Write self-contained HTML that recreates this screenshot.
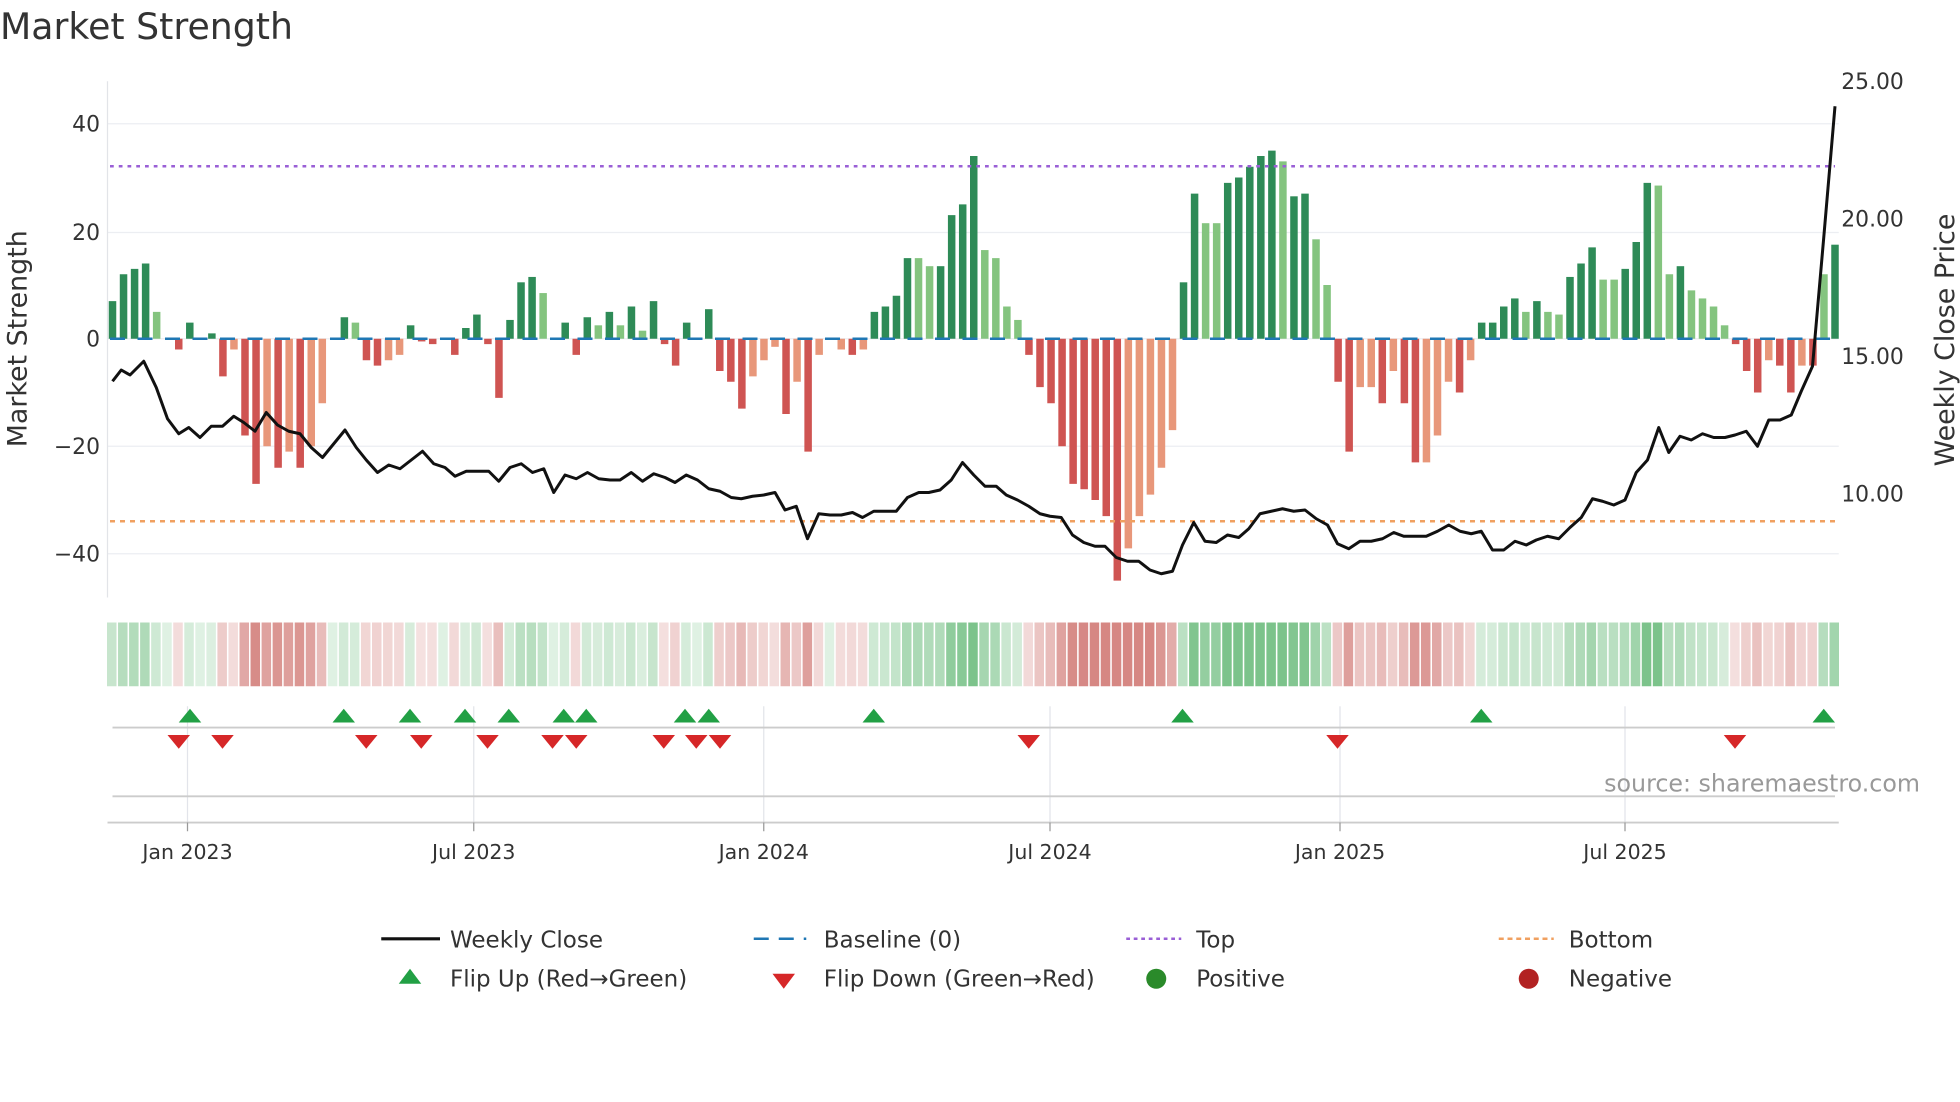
<!DOCTYPE html>
<html><head><meta charset="utf-8"><style>
html,body{margin:0;padding:0;background:#fff;width:1960px;height:1102px;overflow:hidden}
svg{display:block}
text{font-family:"DejaVu Sans","Liberation Sans",sans-serif;fill:#333}
</style></head><body>
<svg id="s" width="1960" height="1102" viewBox="0 0 1568 881.6" xmlns="http://www.w3.org/2000/svg">
<rect width="1568" height="882" fill="#fff"/>
<text x="0" y="31" font-size="29">Market Strength</text>
<g stroke="#eceef2" stroke-width="1">
<line x1="86" x2="1471" y1="99" y2="99"/><line x1="86" x2="1471" y1="186" y2="186"/>
<line x1="86" x2="1471" y1="271" y2="271"/><line x1="86" x2="1471" y1="357" y2="357"/>
<line x1="86" x2="1471" y1="443" y2="443"/>
</g>
<line x1="86" x2="86" y1="65" y2="478" stroke="#e2e4e8"/>
<g font-size="17.5" text-anchor="end">
<text x="80" y="105">40</text><text x="80" y="192">20</text><text x="80" y="277">0</text>
<text x="80" y="363">−20</text><text x="80" y="449">−40</text>
</g>
<g font-size="17.5">
<text x="1473" y="71">25.00</text><text x="1473" y="181">20.00</text>
<text x="1473" y="291">15.00</text><text x="1473" y="401">10.00</text>
</g>
<text transform="translate(21,271) rotate(-90)" font-size="21.5" text-anchor="middle">Market Strength</text>
<text transform="translate(1563,272) rotate(-90)" font-size="21.5" text-anchor="middle">Weekly Close Price</text>
<g id="bars"></g>
<line x1="88" x2="1468" y1="271" y2="271" stroke="#1f77b4" stroke-width="2" stroke-dasharray="12 10"/>
<line x1="88" x2="1468" y1="133" y2="133" stroke="#9a5fd6" stroke-width="2" stroke-dasharray="3 4"/>
<line x1="88" x2="1468" y1="417" y2="417" stroke="#f0a060" stroke-width="2" stroke-dasharray="4 4"/>
<polyline id="price" fill="none" stroke="#111" stroke-width="2.4" stroke-linejoin="round"/>
<g id="strip"></g>
<g stroke="#e2e4ea" stroke-width="1">
<line x1="150" x2="150" y1="565" y2="658"/><line x1="379" x2="379" y1="565" y2="658"/>
<line x1="611" x2="611" y1="565" y2="658"/><line x1="840" x2="840" y1="565" y2="658"/>
<line x1="1072" x2="1072" y1="565" y2="658"/><line x1="1300" x2="1300" y1="565" y2="658"/>
</g>
<line x1="90" x2="1468" y1="582" y2="582" stroke="#ccc" stroke-width="1.5"/>
<line x1="90" x2="1468" y1="637" y2="637" stroke="#ccc" stroke-width="1.5"/>
<line x1="86" x2="1471" y1="658" y2="658" stroke="#ccc" stroke-width="1.5"/>
<g stroke="#999"><line x1="150" x2="150" y1="658" y2="665"/><line x1="379" x2="379" y1="658" y2="665"/><line x1="611" x2="611" y1="658" y2="665"/><line x1="840" x2="840" y1="658" y2="665"/><line x1="1072" x2="1072" y1="658" y2="665"/><line x1="1300" x2="1300" y1="658" y2="665"/></g>
<g id="mk"></g>
<text x="1536" y="633" font-size="19" text-anchor="end" style="fill:#999">source: sharemaestro.com</text>
<g font-size="16.4" text-anchor="middle">
<text x="150" y="687">Jan 2023</text><text x="379" y="687">Jul 2023</text><text x="611" y="687">Jan 2024</text>
<text x="840" y="687">Jul 2024</text><text x="1072" y="687">Jan 2025</text><text x="1300" y="687">Jul 2025</text>
</g>
<g font-size="18.4">
<line x1="305" x2="352" y1="751" y2="751" stroke="#111" stroke-width="2.5"/><text x="360" y="758">Weekly Close</text>
<line x1="603" x2="645" y1="751" y2="751" stroke="#1f77b4" stroke-width="2" stroke-dasharray="12 8"/><text x="659" y="758">Baseline (0)</text>
<line x1="901" x2="945" y1="751" y2="751" stroke="#9a5fd6" stroke-width="2" stroke-dasharray="3 3"/><text x="957" y="758">Top</text>
<line x1="1199" x2="1243" y1="751" y2="751" stroke="#f0a060" stroke-width="2" stroke-dasharray="4 3"/><text x="1255" y="758">Bottom</text>
<polygon points="328,775 319,787 337,787" fill="#22a045"/><text x="360" y="789">Flip Up (Red→Green)</text>
<polygon points="618,779 636,779 627,791" fill="#d62728"/><text x="659" y="789">Flip Down (Green→Red)</text>
<circle cx="925" cy="783" r="8" fill="#2a8a2a"/><text x="957" y="789">Positive</text>
<circle cx="1223" cy="783" r="8" fill="#b22222"/><text x="1255" y="789">Negative</text>
</g>
</svg>
<script>
var V="7D 12D 13D 14D 5L 0 -2R 3D 0 1D -7R -2L -18R -27R -20L -24R -21L -24R -20L -12L 0 4D 3L -4R -5R -4L -3L 2.5D -0.5R -1R 0 -3R 2D 4.5D -1R -11R 3.5D 10.5D 11.5D 8.5L 0 3D -3R 4D 2.5L 5D 2.5L 6D 1.5L 7D -1R -5R 3D 0 5.5D -6R -8R -13R -7L -4L -1.5L -14R -8L -21R -3L 0 -2L -3R -2L 5D 6D 8D 15D 15L 13.5L 13.5D 23D 25D 34D 16.5L 15L 6L 3.5L -3R -9R -12R -20R -27R -28R -30R -33R -45R -39L -33L -29L -24L -17L 10.5D 27D 21.5L 21.5L 29D 30D 32D 34D 35D 33L 26.5D 27D 18.5L 10L -8R -21R -9L -9L -12R -6L -12R -23R -23L -18L -8L -10R -4L 3D 3D 6D 7.5D 5L 7D 5L 4.5L 11.5D 14D 17D 11L 11L 13D 18D 29D 28.5L 12L 13.5D 9L 7.5L 6L 2.5L -1R -6R -10R -4L -5R -10R -5L -5R 12L 17.5D".split(" ");
var C={D:"#2e8b57",L:"#84c47f",R:"#cf5452",Q:"#e8977a"};
var b="",st="",n=V.length,dx=(1468-90)/(n-1);
for(var i=0;i<n;i++){var s=V[i],v=parseFloat(s),t=s.slice(-1),x=90+i*dx;
 if(v<0&&t=="L")t="Q";
 if(v!=0){var y0=271,y1=271-v*4.3;b+='<rect x="'+(x-3)+'" y="'+Math.min(y0,y1)+'" width="6" height="'+Math.abs(y1-y0)+'" fill="'+C[t]+'"/>';}
 if(Math.abs(x-660)<4)continue;
 var a=Math.min(0.75,0.18+Math.abs(v)/50);var col=v>=0?"rgba(80,175,100,"+a+")":"rgba(200,95,90,"+a+")";
 st+='<rect x="'+(x-4.4)+'" y="498" width="7.6" height="51" fill="'+col+'"/>';}
document.getElementById("bars").innerHTML=b;document.getElementById("strip").innerHTML=st;
var P="90,305 97,296 104,300 115,289 125,310 134,335 143,347 151,342 160,350 169,341 178,341 187,333 195,338 204,345 213,330 222,340 231,345 240,347 249,358 258,366 267,355 276,344 285,358 293,368 302,378 311,372 320,375 329,368 338,361 347,371 356,374 364,381 373,377 382,377 391,377 399,385 408,374 417,371 426,378 435,375 443,394 452,380 461,383 470,378 479,383 488,384 496,384 505,378 514,385 523,379 532,382 540,386 549,380 558,384 567,391 576,393 585,398 593,399 602,397 611,396 620,394 628,408 637,405 646,431 655,411 664,412 673,412 682,410 690,414 699,409 708,409 717,409 726,398 735,394 743,394 752,392 761,384 770,370 779,380 788,389 797,389 805,396 814,400 823,405 832,411 840,413 849,414 858,428 867,434 876,437 884,437 893,446 902,449 911,449 920,456 929,459 938,457 946,436 955,418 964,433 973,434 982,428 991,430 999,423 1008,411 1017,409 1026,407 1035,409 1044,408 1053,415 1062,420 1070,435 1079,439 1088,433 1097,433 1106,431 1115,426 1123,429 1132,429 1141,429 1150,425 1159,420 1168,425 1177,427 1185,425 1194,440 1203,440 1212,433 1221,436 1229,432 1238,429 1247,431 1256,422 1265,414 1274,399 1282,401 1291,404 1300,400 1309,378 1318,368 1327,342 1335,362 1344,349 1353,352 1362,347 1371,350 1380,350 1388,348 1397,345 1406,357 1415,336 1424,336 1433,332 1441,313 1450,293 1459,190 1468,85";
document.getElementById("price").setAttribute("points",P);
var m="";[152,275,328,372,407,451,469,548,567,699,946,1185,1459].forEach(function(x){m+='<polygon points="'+x+',567 '+(x-9)+',578 '+(x+9)+',578" fill="#22a045"/>';});
[143,178,293,337,390,442,461,531,557,576,823,1070,1388].forEach(function(x){m+='<polygon points="'+(x-9)+',588 '+(x+9)+',588 '+x+',599" fill="#d62728"/>';});
document.getElementById("mk").innerHTML=m;
</script>
</body></html>
